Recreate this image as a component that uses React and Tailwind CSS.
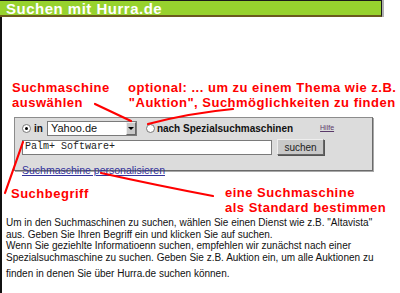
export default function App() {
  return (
    <div className="relative w-[400px] h-[293px] bg-white overflow-hidden font-['Liberation_Sans',Arial,sans-serif]">
      {/* header */}
      <div className="flex">
        <div className="w-[382px] h-[17px] bg-[#97d22e] border-t border-r border-[#1a1a1a] border-b-2 border-b-[#6b5a1e] flex items-center pl-[6px]">
          <span className="text-white font-bold text-[15px] leading-none tracking-[0.5px]">Suchen mit Hurra.de</span>
        </div>
        <div className="w-[2px] h-[17px] bg-[#b0b0b0]" />
      </div>

      <div className="border-l-2 border-[#111] h-[276px] flex flex-col">
        {/* top annotations */}
        <div className="flex pt-[63px] text-[#ff0000] font-bold text-[13px] leading-[15px] tracking-[0.5px] whitespace-nowrap">
          <div className="pl-[10px] w-[126px]">
            <div>Suchmaschine</div>
            <div>auswählen</div>
          </div>
          <div className="flex flex-col items-center">
            <div>optional: ... um zu einem Thema wie z.B.</div>
            <div>"Auktion", Suchmöglichkeiten zu finden</div>
          </div>
        </div>

        {/* search box */}
        <div className="ml-[12px] mt-[7px] w-[359px] h-[54px] bg-[#dcdcdc] border border-[#8c8c8c] border-r-[#6a6a6a] border-b-[#6a6a6a] shadow-[1px_1px_0_#a8a8a8] flex flex-col pl-[7px] pt-[3px]">
          <div className="flex items-center h-[15px]">
            <span className="w-[9px] h-[9px] rounded-full border border-[#777] bg-white flex items-center justify-center">
              <span className="w-[3px] h-[3px] rounded-full bg-black" />
            </span>
            <span className="ml-[3px] font-bold text-[10px] text-[#111]">in</span>
            <div className="ml-[4px] w-[90px] h-[15px] bg-white border border-[#7a7a7a] flex items-center">
              <span className="flex-1 pl-[3px] text-[11px] text-[#111] leading-none">Yahoo.de</span>
              <span className="w-[10px] h-[13px] bg-[#c8c8c8] border border-[#eee] border-r-[#666] border-b-[#666] flex items-center justify-center">
                <span className="w-0 h-0 border-l-[3px] border-r-[3px] border-t-[3px] border-l-transparent border-r-transparent border-t-black" />
              </span>
            </div>
            <span className="ml-[9px] w-[9px] h-[9px] rounded-full border border-[#777] bg-white" />
            <span className="ml-[2px] font-bold text-[10px] text-[#111]">nach Spezialsuchmaschinen</span>
            <span className="ml-[27px] text-[7px] text-[#5a3a6a] underline">Hilfe</span>
          </div>
          <div className="flex items-center mt-[3px]">
            <div className="w-[250px] h-[15px] bg-white border border-[#7a7a7a] flex items-center pl-[2px]">
              <span className="font-['Liberation_Mono',monospace] text-[10px] text-[#222] leading-none">Palm+ Software+</span>
            </div>
            <div className="ml-[5px] w-[47px] h-[16px] bg-[#c8c8c8] border border-[#666] border-t-[#eee] border-l-[#eee] shadow-[1px_1px_0_#555] flex items-center justify-center text-[10px] text-[#222]">
              suchen
            </div>
          </div>
          <div className="mt-[2px]">
            <span className="text-[10.5px] text-[#33339a] underline">Suchmaschine personalisieren</span>
          </div>
        </div>

        {/* bottom annotations */}
        <div className="flex justify-between mt-[14px] text-[#ff0000] font-bold text-[13px] leading-[15px] tracking-[0.5px] whitespace-nowrap">
          <div className="pl-[9px] pt-[1px]">Suchbegriff</div>
          <div className="w-[175px]">
            <div>eine Suchmaschine</div>
            <div>als Standard bestimmen</div>
          </div>
        </div>

        {/* body text */}
        <div className="mt-[2px] pl-[4px] text-[10px] leading-[11.5px] text-[#111] whitespace-nowrap">
          <div>
            Um in den Suchmaschinen zu suchen, wählen Sie einen Dienst wie z.B. "Altavista"<br />
            aus. Geben Sie Ihren Begriff ein und klicken Sie auf suchen.<br />
            Wenn Sie geziehlte Informatioenn suchen, empfehlen wir zunächst nach einer<br />
            Spezialsuchmaschine zu suchen. Geben Sie z.B. Auktion ein, um alle Auktionen zu
          </div>
          <div className="mt-[5px]">finden in denen Sie über Hurra.de suchen können.</div>
        </div>
      </div>

      {/* red annotation lines */}
      <svg className="absolute inset-0 pointer-events-none" width="400" height="293">
        <g stroke="#ff0000" strokeWidth="2.2" fill="none" strokeLinecap="round">
          <path d="M95 104 L131 121" />
          <path d="M148 124 Q190 113 233 109" />
          <path d="M5 193 L23 142" />
          <path d="M101 173 Q160 186 213 196" />
        </g>
      </svg>
    </div>
  );
}
